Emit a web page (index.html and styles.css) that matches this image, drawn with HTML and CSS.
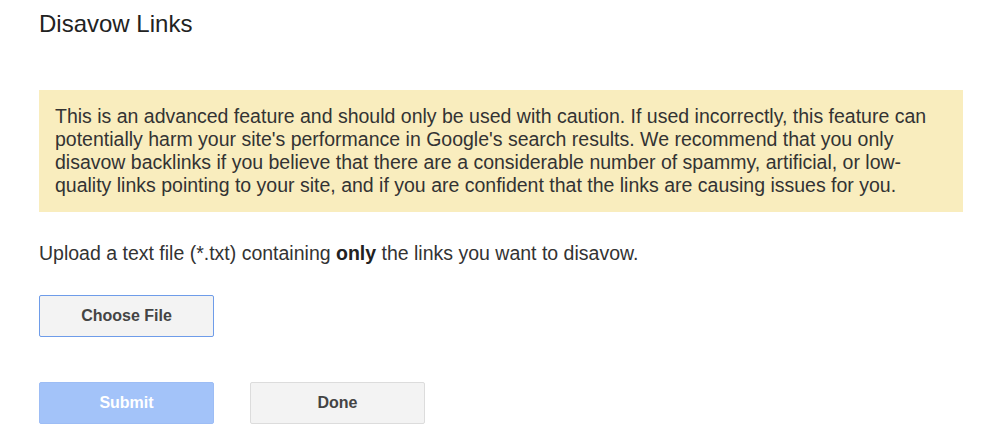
FILE: index.html
```html
<!DOCTYPE html>
<html lang="en">
<head>
  <meta charset="UTF-8">
  <meta name="viewport" content="width=device-width, initial-scale=1.0">
  <title>Disavow Links</title>
  <link rel="stylesheet" href="styles.css">
</head>
<body>
  <div class="page">
    <h1 class="title">Disavow Links</h1>
    <div class="warning">
      This is an advanced feature and should only be used with caution. If used incorrectly, this feature can
      potentially harm your site's performance in Google's search results. We recommend that you only
      disavow backlinks if you believe that there are a considerable number of spammy, artificial, or low-quality
      links pointing to your site, and if you are confident that the links are causing issues for you.
    </div>
    <p class="hint">Upload a text file (*.txt) containing <b>only</b> the links you want to disavow.</p>
    <div class="file-row">
      <button class="btn btn-file" type="button">Choose File</button>
    </div>
    <div class="actions">
      <button class="btn btn-primary" type="button" disabled>Submit</button>
      <button class="btn btn-default" type="button">Done</button>
    </div>
  </div>
</body>
</html>
```

FILE: styles.css
```css
body {
  margin: 0;
  font-family: Arial, "Liberation Sans", sans-serif;
  color: #222;
  background: #fff;
}
.page {
  padding: 11px 20px 0 39px;
}
.title {
  margin: 0;
  font-size: 24px;
  font-weight: normal;
  line-height: 26px;
}
.warning {
  margin-top: 53px;
  background-color: #f9edbe;
  padding: 15px 30px 15px 16px;
  font-size: 19.5px;
  line-height: 23px;
  color: #333;
}
.hint {
  margin: 30px 0 0;
  font-size: 19.5px;
  line-height: 23px;
  color: #333;
}
.hint b {
  color: #222;
}
.file-row {
  margin-top: 30px;
}
.btn {
  width: 175px;
  height: 42px;
  font-family: Arial, "Liberation Sans", sans-serif;
  font-size: 16px;
  font-weight: bold;
  border-radius: 2px;
  cursor: pointer;
}
.btn-file {
  background-color: #f3f3f3;
  border: 1px solid #6e9ce9;
  color: #444;
}
.actions {
  display: flex;
  gap: 36px;
  margin-top: 45px;
}
.btn-primary {
  background-color: #a3c3f9;
  border: 1px solid #9dbdf5;
  color: #fff;
}
.btn-default {
  background-color: #f3f3f3;
  border: 1px solid #dcdcdc;
  color: #444;
}
```
